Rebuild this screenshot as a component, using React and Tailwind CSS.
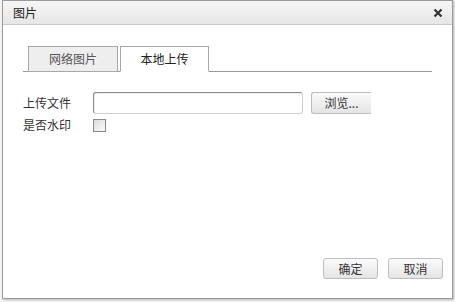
import React from 'react';

const font = { fontFamily: '"Noto Sans CJK SC", "Liberation Sans", sans-serif' };

export default function App() {
    return (
        <div className="w-[455px] h-[302px] bg-[#f4f4f4] flex items-start" style={font}>
            <div className="ml-[2px] w-[451px] h-[299px] bg-white border border-[#9a9a9a] shadow-[1px_1px_2px_rgba(0,0,0,0.25)] flex flex-col text-[12px] text-[#333]">
                <div className="h-[24px] flex items-center justify-between pl-[10px] pr-[9px] bg-gradient-to-b from-[#f7f7f7] to-[#e6e6e6] border-b border-[#c8c8c8]">
                    <span className="text-[12px] text-[#222]">图片</span>
                    <svg width="10" height="10" viewBox="0 0 10 10">
                        <path d="M1.5 1.5 L8.5 8.5 M8.5 1.5 L1.5 8.5" stroke="#333" strokeWidth="2.2" />
                    </svg>
                </div>
                <div className="flex-1 flex flex-col px-[20px] pt-[20px]">
                    <div className="flex items-end gap-[2px] pl-[5px] border-b border-[#999] h-[27px]">
                        <div className="w-[90px] h-[26px] -mb-px flex items-center justify-center bg-[#eeeeee] border border-[#a8a8a8] text-[#555]">
                            网络图片
                        </div>
                        <div className="w-[89px] h-[26px] -mb-px flex items-center justify-center bg-white border border-[#a8a8a8] border-b-white text-[#222]">
                            本地上传
                        </div>
                    </div>
                    <div className="mt-[20px] flex items-center h-[22px]">
                        <span className="w-[70px]">上传文件</span>
                        <div className="w-[210px] h-[22px] rounded-[3px] border border-[#cfcfcf] border-l-[#8c8c8c] border-t-[#8c8c8c] shadow-[inset_1px_1px_1px_rgba(0,0,0,0.08)] bg-white"></div>
                        <div className="ml-[8px] w-[60px] h-[22px] rounded-l-[3px] border border-[#bdbdbd] border-r-0 bg-gradient-to-b from-[#fbfbfb] to-[#e4e4e4] flex items-center justify-center text-[#333]">
                            浏览...
                        </div>
                    </div>
                    <div className="mt-[4px] flex items-center h-[14px]">
                        <span className="w-[70px]">是否水印</span>
                        <div className="w-[13px] h-[13px] border border-[#8a8a8a] bg-gradient-to-br from-[#dcdcdc] to-[#fafafa]"></div>
                    </div>
                    <div className="flex-1"></div>
                    <div className="flex justify-end gap-[10px] pr-[-11px] mr-[-11px] mb-[19px]">
                        <div className="w-[55px] h-[21px] rounded-[3px] border border-[#bdbdbd] bg-gradient-to-b from-[#fbfbfb] to-[#e4e4e4] flex items-center justify-center text-[#333]">
                            确定
                        </div>
                        <div className="w-[55px] h-[21px] rounded-[3px] border border-[#bdbdbd] bg-gradient-to-b from-[#fbfbfb] to-[#e4e4e4] flex items-center justify-center text-[#333]">
                            取消
                        </div>
                    </div>
                </div>
            </div>
        </div>
    );
}
